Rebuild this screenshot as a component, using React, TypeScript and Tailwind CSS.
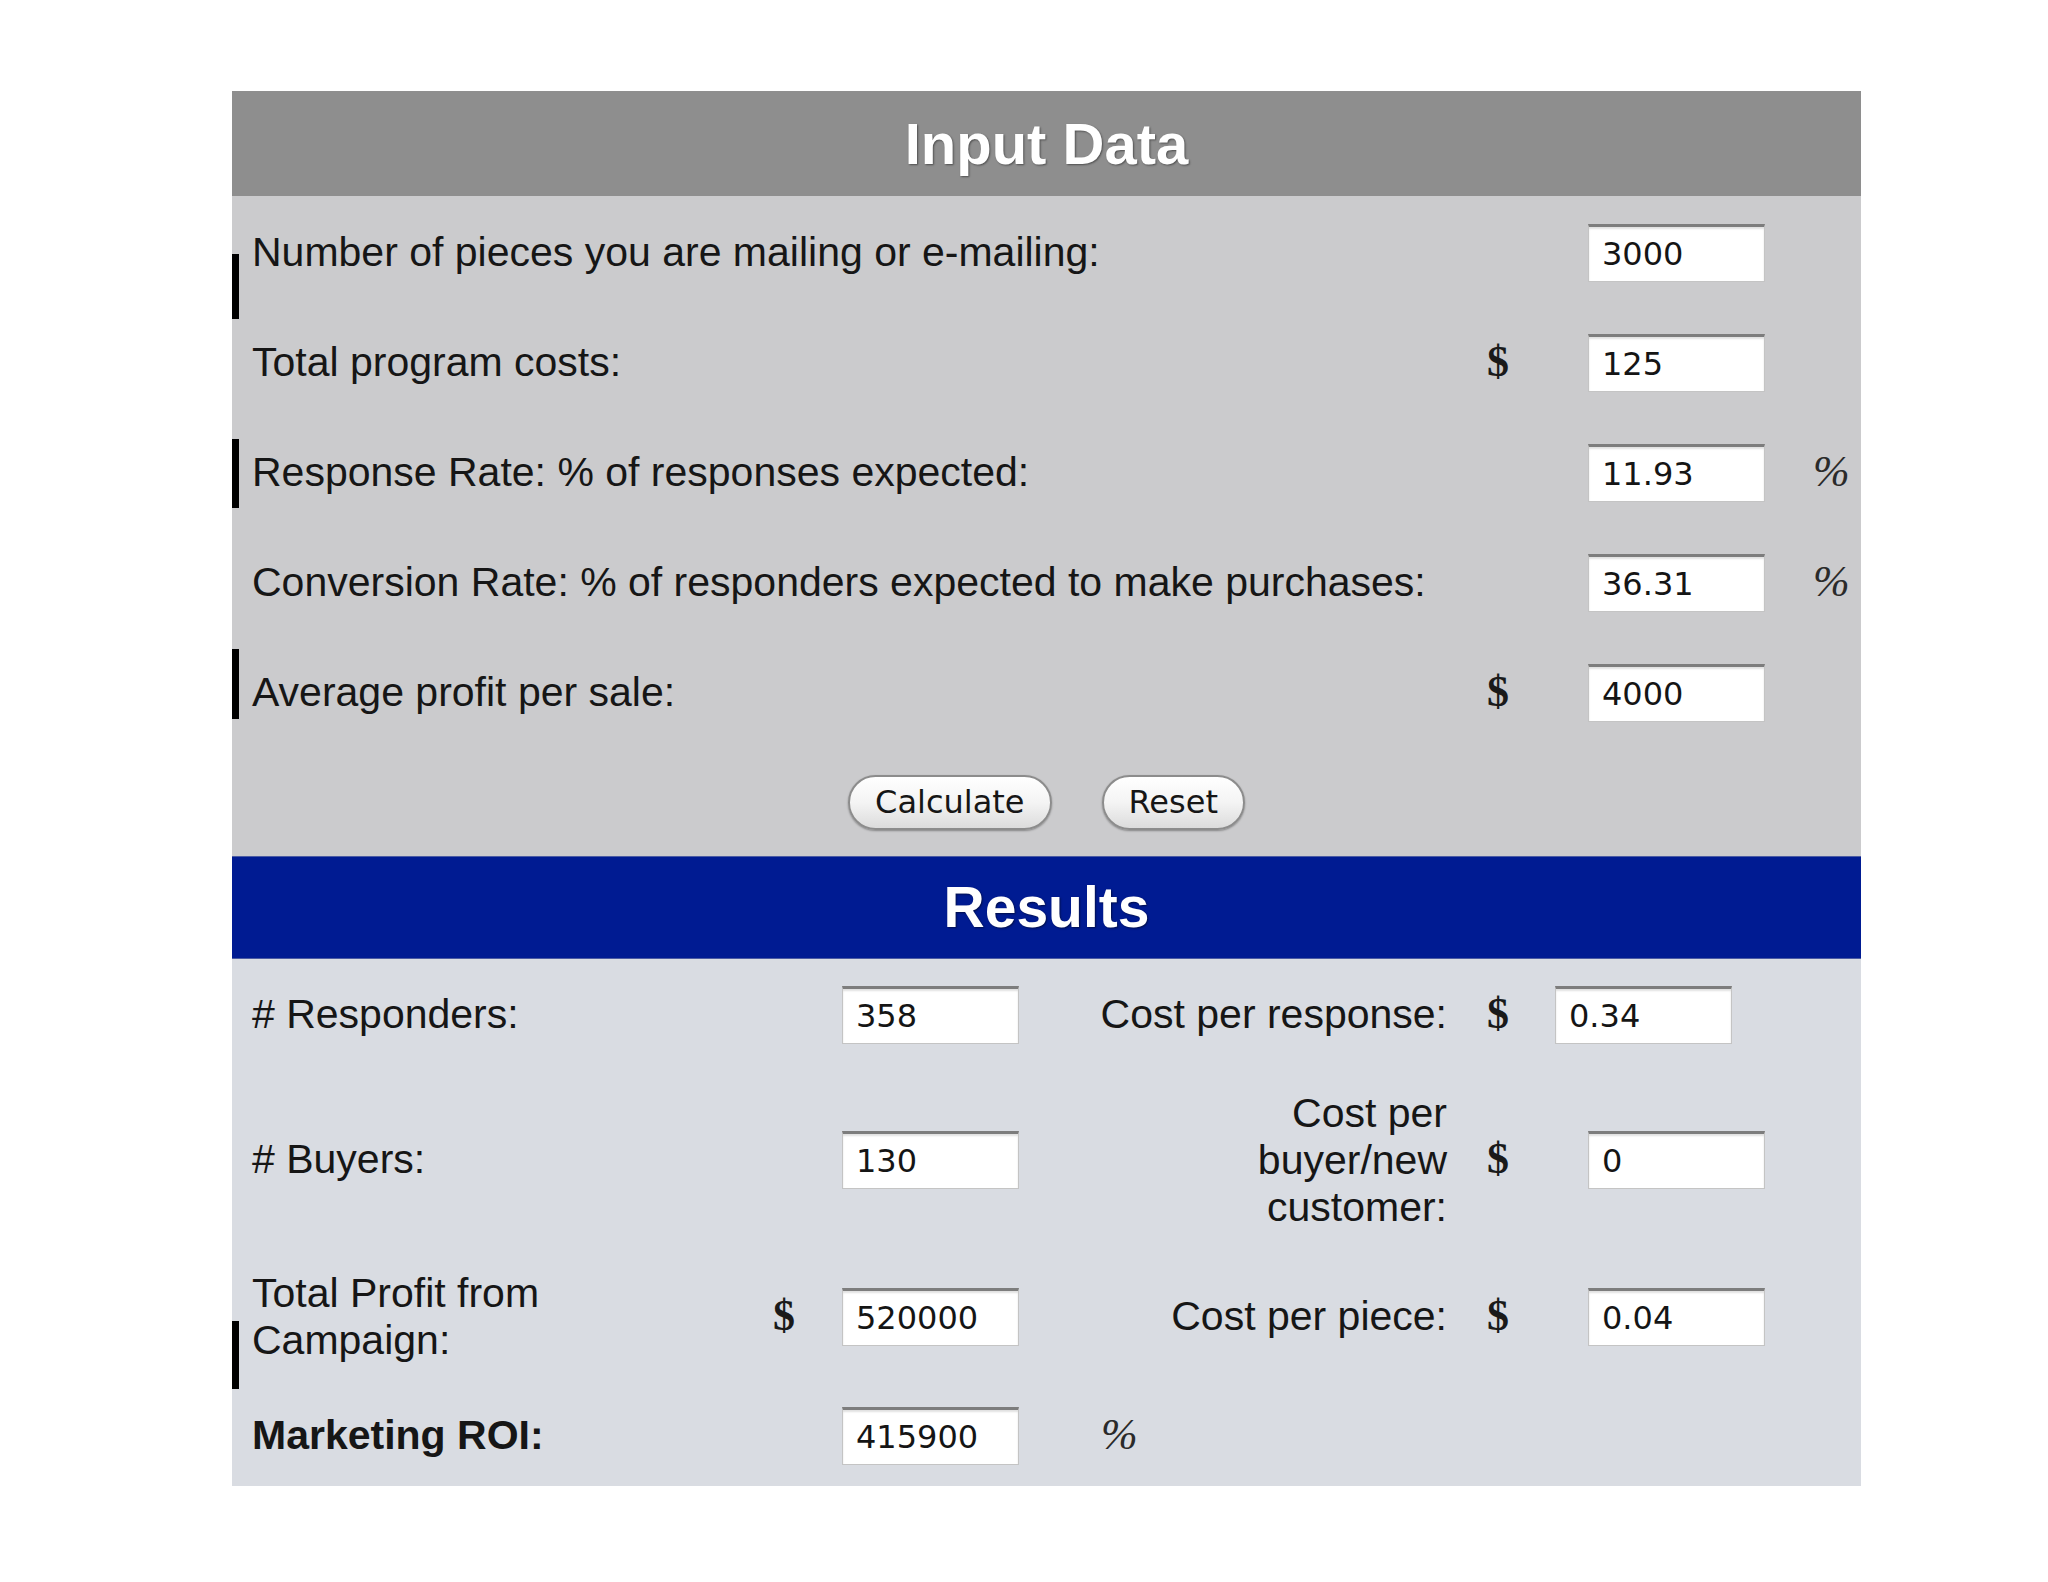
import React from 'react';

const sans = "font-['Liberation_Sans',Arial,sans-serif]";
const serif = "font-['Liberation_Serif','Times_New_Roman',serif]";

function Field({ value, className = '' }: { value: string; className?: string }) {
  return (
    <input
      readOnly
      value={value}
      className={`h-[58px] w-[177px] border border-[#c4c4c4] border-t-[3px] border-t-[#7d7d7d] bg-white pl-[13px] font-['DejaVu_Sans',Verdana,sans-serif] text-[32px] text-[#151515] shadow-[inset_0_2px_2px_rgba(0,0,0,0.12)] outline-none ${className}`}
    />
  );
}

function Bar({ top, h }: { top: string; h: string }) {
  return <span className={`absolute left-0 w-[7px] bg-black ${top} ${h}`} />;
}

const Dollar = () => <span className={`${serif} text-[44px] font-semibold leading-none text-[#1a1a1a]`}>$</span>;
const Pct = () => <span className={`${serif} text-[44px] italic leading-none text-[#2a2a2a]`}>%</span>;

const inputs = [
  { label: 'Number of pieces you are mailing or e-mailing:', value: '3000', pre: false, pct: false },
  { label: 'Total program costs:', value: '125', pre: true, pct: false },
  { label: 'Response Rate: % of responses expected:', value: '11.93', pre: false, pct: true },
  { label: 'Conversion Rate: % of responders expected to make purchases:', value: '36.31', pre: false, pct: true },
  { label: 'Average profit per sale:', value: '4000', pre: true, pct: false },
];

const bars: Record<number, React.ReactNode> = {
  0: <Bar top="top-[58px]" h="h-[65px]" />,
  2: <Bar top="top-[23px]" h="h-[69px]" />,
  4: <Bar top="top-[13px]" h="h-[70px]" />,
};

function PillButton({ children }: { children: React.ReactNode }) {
  return (
    <button className="h-[55px] rounded-full border-2 border-[#8c8c8c] bg-gradient-to-b from-white via-[#f4f4f4] to-[#dcdcdc] px-[25px] font-['DejaVu_Sans',Verdana,sans-serif] text-[32px] leading-none text-[#161616] shadow-[0_1px_2px_rgba(0,0,0,0.35)]">
      {children}
    </button>
  );
}

export default function App() {
  return (
    <div className="min-h-screen bg-white pl-[232px] pt-[91px]">
      <div className={`w-[1629px] ${sans} text-[41px] text-[#161616]`}>
        <div className="flex h-[105px] items-center justify-center bg-[#8e8e8e]">
          <h1 className="text-[58px] font-bold text-white [text-shadow:1px_1px_2px_rgba(0,0,0,0.45)]">Input Data</h1>
        </div>

        <div className="bg-[#cbcbcd]">
          {inputs.map((row, i) => (
            <div key={i} className="relative grid h-[110px] grid-cols-[1242px_48px_66px_177px_96px] items-center pt-[3px]">
              {bars[i]}
              <span className="pl-[20px]">{row.label}</span>
              <span className="text-center">{row.pre ? <Dollar /> : null}</span>
              <span />
              <Field value={row.value} />
              <span className="pl-[48px]">{row.pct ? <Pct /> : null}</span>
            </div>
          ))}
          <div className="flex h-[110px] items-center justify-center gap-[50px] pt-[2px]">
            <PillButton>Calculate</PillButton>
            <PillButton>Reset</PillButton>
          </div>
        </div>

        <div className="flex h-[103px] items-center justify-center border-y border-[#4b5ba3] bg-[#001b92]">
          <h2 className="text-[57px] font-bold text-white [text-shadow:1px_1px_2px_rgba(0,0,0,0.5)]">Results</h2>
        </div>

        <div className="grid grid-cols-[528px_48px_34px_177px_455px_48px_66px_177px_96px] items-center bg-[#d9dce2]">
          {/* row 1 */}
          <span className="flex h-[112px] items-center pl-[20px]"># Responders:</span>
          <span />
          <span />
          <Field value="358" />
          <span className="pr-[27px] text-right">Cost per response:</span>
          <span className="text-center"><Dollar /></span>
          <span />
          <Field value="0.34" className="-ml-[33px]" />
          <span />

          {/* row 2 */}
          <span className="flex h-[178px] items-center pl-[20px]"># Buyers:</span>
          <span />
          <span />
          <Field value="130" />
          <span className="pr-[27px] text-right leading-[47px]">
            Cost per
            <br />
            buyer/new
            <br />
            customer:
          </span>
          <span className="text-center"><Dollar /></span>
          <span />
          <Field value="0" />
          <span />

          {/* row 3 */}
          <span className="relative flex h-[136px] items-center pl-[20px] leading-[47px]">
            <Bar top="top-[72px]" h="h-[68px]" />
            <span>
              Total Profit from
              <br />
              Campaign:
            </span>
          </span>
          <span className="text-center"><Dollar /></span>
          <span />
          <Field value="520000" />
          <span className="pr-[27px] text-right">Cost per piece:</span>
          <span className="text-center"><Dollar /></span>
          <span />
          <Field value="0.04" />
          <span />

          {/* row 4 */}
          <span className="flex h-[101px] items-center pl-[20px] font-bold">Marketing ROI:</span>
          <span />
          <span />
          <Field value="415900" />
          <span className="pl-[82px]"><Pct /></span>
          <span />
          <span />
          <span />
          <span />
        </div>
      </div>
    </div>
  );
}
